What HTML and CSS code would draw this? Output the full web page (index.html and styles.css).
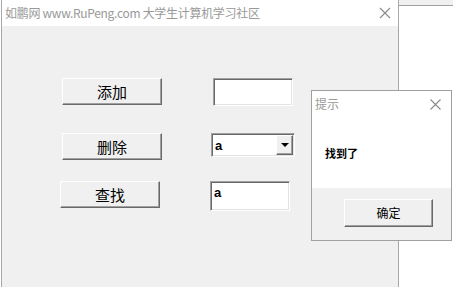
FILE: index.html
```
<!DOCTYPE html>
<html lang="zh-CN">

<head>
    <meta charset="UTF-8">
    <title>如鹏网 www.RuPeng.com 大学生计算机学习社区</title>
    <link rel="stylesheet" href="styles.css">
</head>

<body>
    <div class="desk-strip"></div>

    <div class="window main-window">
        <div class="title-bar">
            <span class="title main-title">如鹏网 www.RuPeng.com 大学生计算机学习社区</span>
            <span class="close">
                <svg width="12" height="12" viewBox="0 0 12 12"><path d="M1 1L11 11M11 1L1 11" stroke="#8a8a8a" stroke-width="1.1" fill="none"/></svg>
            </span>
        </div>
        <div class="client">
            <div class="row row-add">
                <button class="btn big-btn">添加</button>
                <div class="textbox tb-add"></div>
            </div>
            <div class="row row-del">
                <button class="btn big-btn">删除</button>
                <div class="combo">
                    <span class="combo-text">a</span>
                    <span class="combo-arrow"></span>
                </div>
            </div>
            <div class="row row-find">
                <button class="btn big-btn">查找</button>
                <div class="textbox tb-find">a</div>
            </div>
        </div>
    </div>

    <div class="window msg-box">
        <div class="msg-title">
            <span class="title">提示</span>
            <span class="close">
                <svg width="11" height="11" viewBox="0 0 11 11"><path d="M0.5 0.5L10.5 10.5M10.5 0.5L0.5 10.5" stroke="#8a8a8a" stroke-width="1.1" fill="none"/></svg>
            </span>
        </div>
        <div class="msg-body">找到了</div>
        <div class="msg-footer">
            <button class="btn ok-btn">确定</button>
        </div>
    </div>
</body>

</html>
```

FILE: styles.css
```
* {
    box-sizing: border-box;
}

body {
    margin: 0;
    width: 453px;
    height: 287px;
    overflow: hidden;
    background: #fff;
    font-family: "Noto Sans CJK SC", "Noto Sans", sans-serif;
    position: relative;
}

/* 뒤쪽 창 윗부분 */
.desk-strip {
    position: absolute;
    left: 399px;
    top: 0;
    width: 54px;
    height: 6px;
    background: #f0f0f0;
    border-bottom: 1px solid #a0a0a0;
}

.window {
    position: absolute;
}

.main-window {
    left: 1px;
    top: 0;
    width: 398px;
    height: 287px;
    border-left: 1px solid #a8a8a8;
    border-right: 1px solid #a8a8a8;
    background: #f0f0f0;
}

.title-bar {
    height: 26px;
    background: #fff;
    display: flex;
    align-items: center;
    justify-content: space-between;
    padding: 0 7px 0 3px;
}

.title {
    color: #999;
    font-size: 12px;
    line-height: 1;
    white-space: nowrap;
}

.main-title {
    letter-spacing: -0.3px;
}

.close {
    display: flex;
}

.client {
    display: flex;
    flex-direction: column;
    padding-top: 52px;
}

.row {
    display: flex;
    align-items: flex-start;
}

.row-add {
    padding-left: 60px;
    gap: 51px;
}

.row-del {
    margin-top: 27px;
    padding-left: 60px;
    gap: 49px;
}

.row-find {
    margin-top: 21px;
    padding-left: 58px;
    gap: 50px;
}

.btn {
    font-family: "Noto Sans CJK SC", sans-serif;
    background: #f0f0f0;
    border: 1px solid;
    border-color: #fff #696969 #696969 #fff;
    box-shadow: inset -1px -1px 0 #a0a0a0;
    color: #000;
    padding: 0;
    margin: 0;
    line-height: 1;
}

.big-btn {
    width: 100px;
    height: 27px;
    font-size: 15px;
}

.textbox, .combo {
    background: #fff;
    border: 1px solid;
    border-color: #a0a0a0 #fff #fff #a0a0a0;
    box-shadow: inset 1px 1px 0 #696969, inset -1px -1px 0 #e3e3e3;
    font-family: "Liberation Sans", Arial, sans-serif;
    font-weight: bold;
    font-size: 13px;
    color: #000;
}

.tb-add {
    width: 80px;
    height: 28px;
}

.tb-find {
    width: 80px;
    height: 30px;
    padding: 3px 0 0 3px;
}

.combo {
    width: 84px;
    height: 24px;
    display: flex;
    align-items: center;
    justify-content: space-between;
    padding: 2px 1px 2px 3px;
}

.combo-text {
    line-height: 1;
}

.combo-arrow {
    width: 17px;
    height: 20px;
    background: #f0f0f0;
    border: 1px solid;
    border-color: #fff #696969 #696969 #fff;
    box-shadow: inset -1px -1px 0 #a0a0a0;
    display: flex;
    align-items: center;
    justify-content: center;
}

.combo-arrow::after {
    content: "";
    border-left: 4px solid transparent;
    border-right: 4px solid transparent;
    border-top: 4px solid #000;
}

/* 메시지 상자 */
.msg-box {
    left: 311px;
    top: 90px;
    width: 141px;
    height: 151px;
    border: 1px solid #a0a0a0;
    background: #f0f0f0;
    display: flex;
    flex-direction: column;
}

.msg-title {
    height: 26px;
    background: #fff;
    display: flex;
    align-items: center;
    justify-content: space-between;
    padding: 0 10px 0 3px;
}

.msg-title .title {
    font-size: 12px;
}

.msg-body {
    height: 71px;
    background: #fff;
    font-size: 11px;
    font-weight: bold;
    padding: 30px 0 0 13px;
    line-height: 1.2;
}

.msg-footer {
    flex: 1;
    padding: 11px 0 0 32px;
}

.ok-btn {
    width: 89px;
    height: 28px;
    font-size: 12px;
}
```
